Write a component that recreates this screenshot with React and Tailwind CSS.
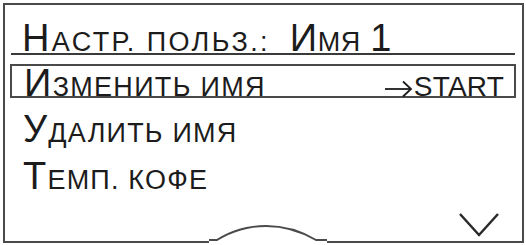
function Label({ parts }) {
  return (
    <>
      {parts.map(([text, big], i) =>
        big ? (
          <span key={i} className="text-[38px]">{text}</span>
        ) : (
          <span key={i} className="text-[27px] leading-none uppercase">{text}</span>
        )
      )}
    </>
  );
}

export default function App() {
  const rows = [
    [["У", true], ["далить имя", false]],
    [["Т", true], ["емп. кофе", false]],
  ];

  return (
    <div className="w-[526px] h-[245px] bg-white pl-[3px] pt-[3px] font-['Liberation_Sans',sans-serif] text-[#1c1c1c]">
      <div className="relative w-[521px] h-[240px] border-2 border-[#4a4a4a] pl-[6px] pr-[7px]">
        {/* title */}
        <div className="h-[50px] border-b-2 border-[#3a3a3a] pl-[11px] pt-[18px] text-[38px] leading-[30px] whitespace-pre">
          <span className="tracking-[2.4px]">
            <Label parts={[["Н", true], ["астр. польз.:  ", false]]} />
          </span>
          <span className="tracking-[0.5px]">
            <Label parts={[["И", true], ["мя", false]]} />
          </span>
          <span className="text-[38px] tracking-[-1px]"> 1</span>
        </div>

        {/* selected row */}
        <div className="mt-[9px] -ml-[1px] mr-[-1px] h-[34px] border-2 border-[#4a4a4a] flex items-baseline justify-between pl-[12px] pr-[10px]">
          <div className="text-[38px] leading-[30px] mt-[2px] tracking-[1.3px]">
            <Label parts={[["И", true], ["зменить имя", false]]} />
          </div>
          <div className="flex items-baseline">
            <svg className="self-center mt-[3px] mr-[1px]" width="29" height="18" viewBox="0 0 29 18" fill="none" stroke="#1c1c1c" strokeWidth="1.8">
              <path d="M1 9 H27" />
              <path d="M19 1.5 L27 9 L19 16.5" />
            </svg>
            <span className="text-[28px] leading-[30px] tracking-[0.2px]">START</span>
          </div>
        </div>

        {/* other rows */}
        <div className="pl-[12px] pt-[8px]">
          {rows.map((r, i) => (
            <div key={i} className="h-[47px] text-[38px] leading-[47px] tracking-[1.2px] whitespace-pre">
              <Label parts={r} />
            </div>
          ))}
        </div>

        {/* bottom arch */}
        <svg className="absolute left-[204px] bottom-[-3px]" width="118" height="20" viewBox="0 0 118 20" fill="none">
          <rect x="0" y="14" width="118" height="6" fill="white" />
          <path d="M0 16 H8 C24 6 40 2 57 2 C74 2 90 6 107 16 H118" stroke="#4a4a4a" strokeWidth="2" />
        </svg>

        {/* scroll-down chevron */}
        <svg className="absolute left-[453px] bottom-[3px]" width="42" height="26" viewBox="0 0 42 26" fill="none" stroke="#2a2a2a" strokeWidth="2.5">
          <path d="M2 2 L21 23 L40 2" />
        </svg>
      </div>
    </div>
  );
}
